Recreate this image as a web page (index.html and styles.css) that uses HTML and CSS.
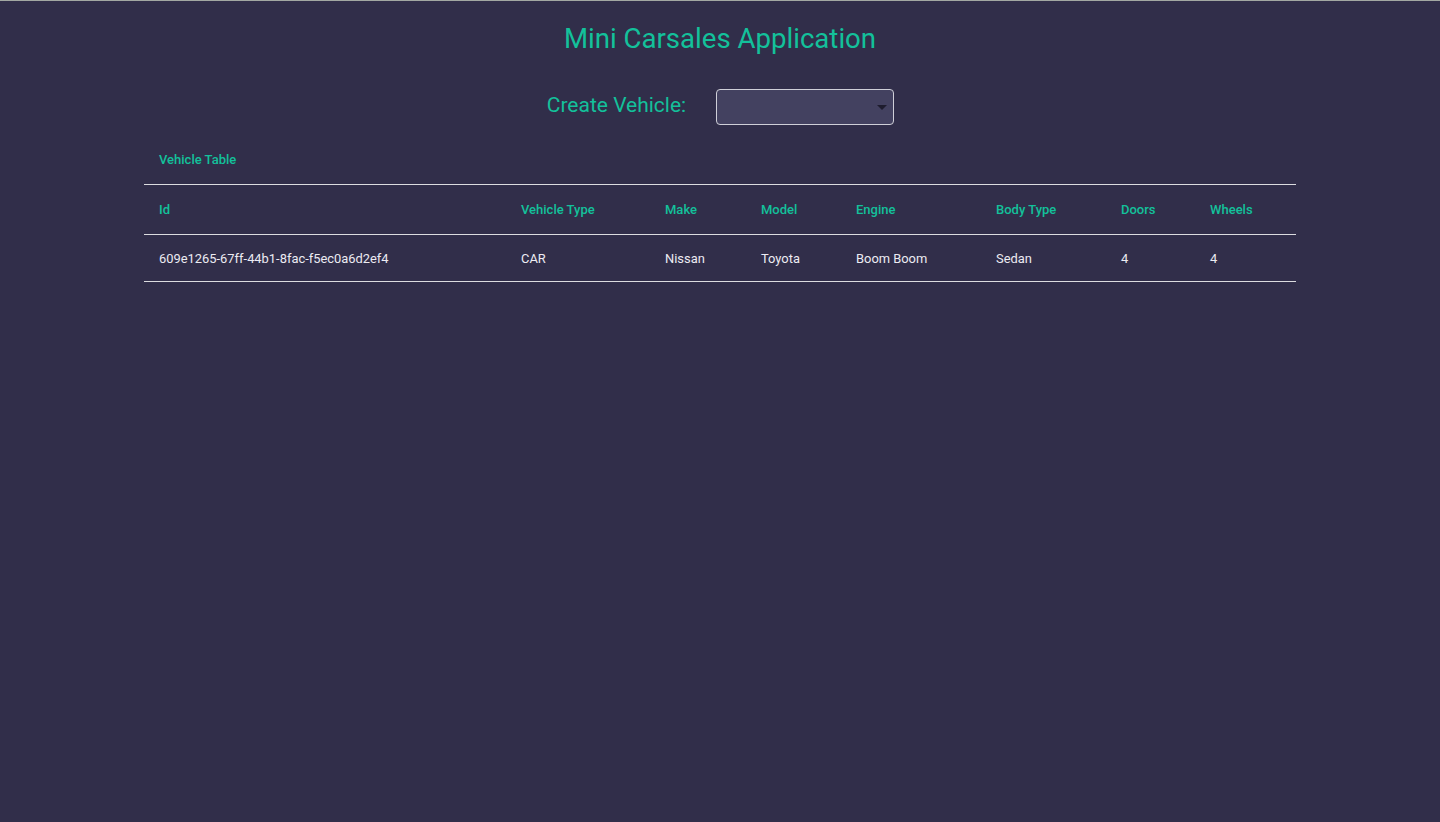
FILE: index.html
```html
<!DOCTYPE html>
<html>
<head>
<meta charset="utf-8">
<title>Mini Carsales Application</title>
<link rel="stylesheet" href="styles.css">
</head>
<body>
<div class="app">
  <h1 class="title">Mini Carsales Application</h1>
  <div class="create">
    <label class="create-label">Create Vehicle:</label>
    <div class="select"><span class="caret"></span></div>
  </div>
  <div class="table-wrap">
    <div class="caption">Vehicle Table</div>
    <table class="vtable">
      <colgroup>
        <col class="c1"><col class="c2"><col class="c3"><col class="c4"><col class="c5"><col class="c6"><col class="c7"><col class="c8">
      </colgroup>
      <thead>
        <tr><th>Id</th><th>Vehicle Type</th><th>Make</th><th>Model</th><th>Engine</th><th>Body Type</th><th>Doors</th><th>Wheels</th></tr>
      </thead>
      <tbody>
        <tr><td>609e1265-67ff-44b1-8fac-f5ec0a6d2ef4</td><td>CAR</td><td>Nissan</td><td>Toyota</td><td>Boom Boom</td><td>Sedan</td><td>4</td><td>4</td></tr>
      </tbody>
    </table>
  </div>
</div>
</body>
</html>
```

FILE: styles.css
```css
html, body {
  margin: 0;
  padding: 0;
  height: 100%;
}
body {
  background: #312e4a;
  font-family: Roboto, "Liberation Sans", sans-serif;
  border-top: 1px solid #a3a8a3;
  box-sizing: border-box;
}
.app {
  display: flex;
  flex-direction: column;
  align-items: center;
}
.title {
  margin: 20px 0 0;
  font-size: 27.6px;
  font-weight: 400;
  line-height: 36px;
  color: #13c19b;
}
.create {
  display: flex;
  align-items: center;
  gap: 30px;
  margin-top: 32px;
  padding-left: 1px;
}
.create-label {
  font-size: 21px;
  color: #13c19b;
  line-height: 24px;
  margin-bottom: 4px;
}
.select {
  position: relative;
  width: 176px;
  height: 34px;
  background: #434160;
  border: 1px solid #cfcfd8;
  border-radius: 4px;
}
.caret {
  position: absolute;
  right: 6px;
  top: 15px;
  width: 0;
  height: 0;
  border-left: 5px solid transparent;
  border-right: 5px solid transparent;
  border-top: 5px solid #1e1c2e;
}
.table-wrap {
  width: 1152px;
  margin-top: 19px;
}
.caption {
  font-size: 13px;
  font-weight: 500;
  color: #13c19b;
  padding: 1px 15px 9px;
  height: 30px;
  line-height: 30px;
  border-bottom: 1px solid #dcdce0;
}
.vtable {
  width: 100%;
  border-collapse: collapse;
  table-layout: fixed;
}
.c1 { width: 362px; }
.c2 { width: 144px; }
.c3 { width: 96px; }
.c4 { width: 95px; }
.c5 { width: 140px; }
.c6 { width: 125px; }
.c7 { width: 89px; }
.c8 { width: 101px; }
.vtable th {
  text-align: left;
  font-size: 13px;
  font-weight: 500;
  color: #13c19b;
  height: 49px;
  padding: 0 15px;
  border-bottom: 1px solid #dcdce0;
}
.vtable td {
  text-align: left;
  font-size: 12.9px;
  color: #ecebf2;
  height: 46px;
  padding: 0 15px;
  border-bottom: 1px solid #dcdce0;
}
```
